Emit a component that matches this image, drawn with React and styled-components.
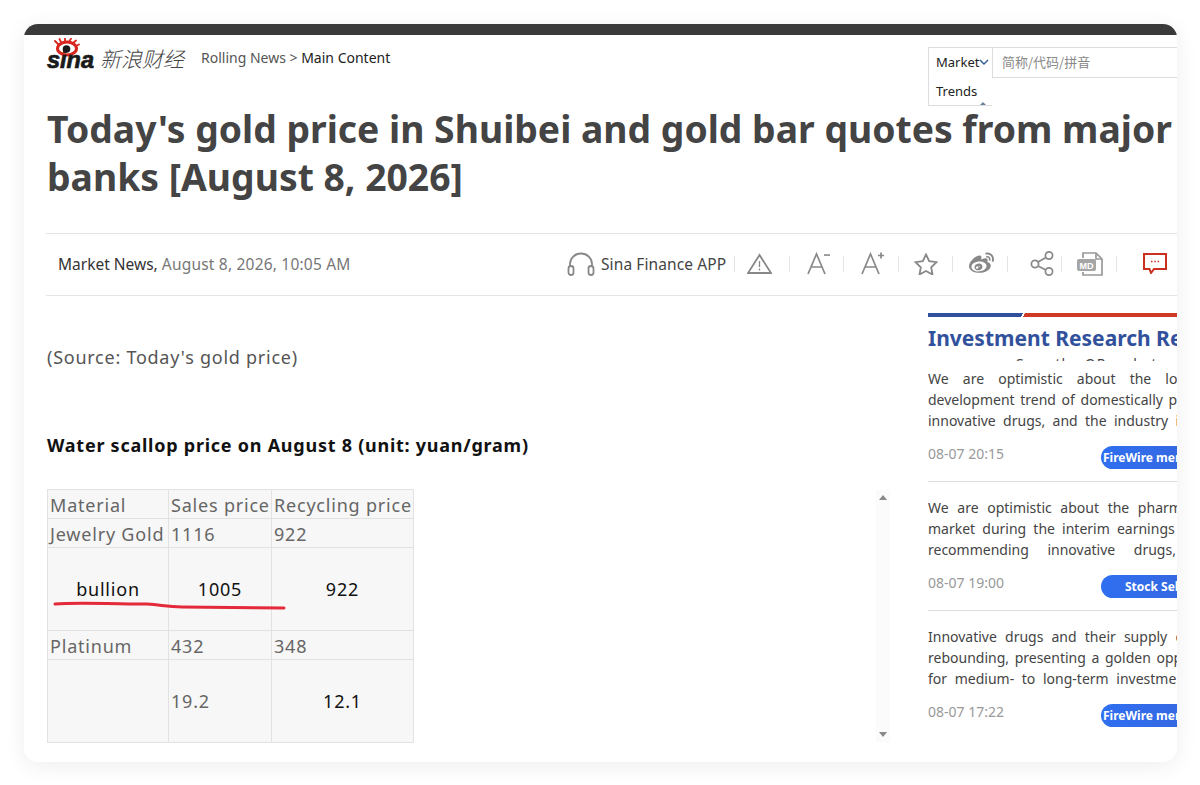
import React from "react";
import styled, { createGlobalStyle } from "styled-components";
import { FaWeibo } from "react-icons/fa";

const GlobalStyle = createGlobalStyle`
    html, body {
        margin: 0;
        background: #fff;
    }
    body {
        font-family: "Noto Sans", "Noto Sans CJK SC", sans-serif;
    }
`

const Page = styled.div`
    width: 1200px;
    height: 785px;
    padding: 24px 23px 23px 24px;
    box-sizing: border-box;
    overflow: hidden;
`

const Card = styled.div`
    height: 738px;
    background: #fff;
    border-radius: 14px;
    overflow: hidden;
    box-shadow: 0 4px 22px rgba(0, 0, 0, .07);
`

const TopBar = styled.div`
    height: 11px;
    background: #3a3a3a;
`

const Header = styled.header`
    height: 70px;
    padding: 3px 0 0 22px;
    box-sizing: border-box;
    display: flex;
    justify-content: space-between;
    align-items: flex-start;
`

const Brand = styled.div`
    display: flex;
    align-items: center;
`

const BrandName = styled.span`
    margin: 4px 0 0 4px;
    font-family: "Noto Sans CJK SC", sans-serif;
    font-size: 21px;
    font-style: italic;
    font-weight: 300;
    color: #444;
`

const Crumbs = styled.nav`
    margin: 2px 0 0 17px;
    font-size: 14px;
    color: #555;

    b {
        font-weight: 400;
        color: #222;
    }
`

const Search = styled.div`
    position: relative;
    width: 249px;
    height: 31px;
    margin-top: 9px;
    display: flex;
    font-size: 13px;
    box-sizing: border-box;
    border: 1px solid #ddd;
    border-right: 0;
`

const SearchType = styled.div`
    width: 64px;
    padding: 0 0 2px 7px;
    box-sizing: border-box;
    display: flex;
    align-items: center;
    color: #222;
    border-right: 1px solid #ddd;
`

const SearchMenu = styled.div`
    position: absolute;
    left: -1px;
    top: 29px;
    width: 64px;
    height: 29px;
    padding: 5px 0 0 7px;
    box-sizing: border-box;
    color: #222;
    background: #fff;
    border-left: 1px solid #ddd;
    border-bottom: 1px solid #ddd;

    &::after {
        content: "";
        position: absolute;
        right: 6px;
        bottom: 0;
        border: 3px solid transparent;
        border-top: 0;
        border-bottom: 3px solid #6c7f9c;
    }
`

const SearchInput = styled.div`
    padding: 0 0 2px 9px;
    display: flex;
    align-items: center;
    color: #888;
    font-family: "Noto Sans CJK SC", sans-serif;
`

const Title = styled.h1`
    margin: 0 0 32px 23px;
    width: 1130px;
    font-size: 37.300px;
    line-height: 48px;
    font-weight: 700;
    color: #444;
`

const MetaBar = styled.div`
    height: 63px;
    margin-left: 22px;
    padding: 0 7px 2px 12px;
    box-sizing: border-box;
    display: flex;
    align-items: center;
    justify-content: space-between;
    border-top: 1px solid #e4e4e4;
    border-bottom: 1px solid #e4e4e4;
    font-size: 15.500px;
`

const Source = styled.div`
    color: #333;

    span {
        color: #777;
        letter-spacing: .2px;
    }
`

const Actions = styled.div`
    display: flex;
    align-items: center;
`

const AppLink = styled.div`
    width: 167px;
    display: flex;
    align-items: center;
    gap: 6px;
    color: #444;
    letter-spacing: .1px;
`

const ActionCell = styled.div`
    width: 54.500px;
    height: 16px;
    box-sizing: border-box;
    display: flex;
    align-items: center;
    justify-content: center;
    color: #888;
    border-left: 1px solid #e4e4e4;

    svg {
        flex: none;
        transform: translateX(${props => props.$shift || 0}px);
    }
`

const Main = styled.div`
    display: flex;
    padding-left: 23px;
`

const Article = styled.article`
    width: 843px;
    margin-right: 38px;
    flex: none;
`

const SourceNote = styled.p`
    margin: 48px 0 0;
    font-size: 18px;
    line-height: 26px;
    letter-spacing: .75px;
    color: #555;
`

const SubHead = styled.h2`
    margin: 62px 0 0;
    font-size: 18px;
    line-height: 26px;
    font-weight: 700;
    letter-spacing: .75px;
    color: #111;
`

const TableWrap = styled.div`
    margin-top: 31px;
    display: flex;
    justify-content: space-between;
`

const TableBox = styled.div`
    position: relative;
    width: 366px;
`

const PriceTable = styled.table`
    width: 366px;
    table-layout: fixed;
    border-collapse: collapse;
    background: #f7f7f7;
    font-size: 18px;
    letter-spacing: .8px;
`

const Cell = styled.td`
    height: ${props => props.$h}px;
    padding: ${props => props.$h < 40 ? 2 : 0}px 2px 0;
    box-sizing: border-box;
    border: 1px solid #e2e2e2;
    white-space: nowrap;
    text-align: ${props => props.$dark ? "center" : "left"};
    color: ${props => props.$dark ? "#111" : "#666"};
`

const RedMark = styled.svg`
    position: absolute;
    left: 0;
    top: 100px;
`

const ScrollTrack = styled.div`
    width: 14px;
    height: 252px;
    margin-top: 1px;
    background: #fbfbfb;
    display: flex;
    flex-direction: column;
    align-items: center;
    justify-content: space-between;
    padding: 5px 0;
    box-sizing: border-box;
`

const Arrow = styled.i`
    border: 4px solid transparent;
    border-top: 0;
    border-bottom: 5px solid #888;
    ${props => props.$down && "transform: rotate(180deg);"}
`

const Side = styled.aside`
    width: 320px;
    flex: none;
    padding-top: 17px;
`

const SideRule = styled.div`
    height: 4px;
    background: linear-gradient(115deg, #31519c 0, #31519c 86px, #fff 86px, #fff 88px, #cf3a26 88px);
`

const SideTitle = styled.h3`
    margin: 5px 0 0;
    font-size: 21px;
    line-height: 32px;
    font-weight: 700;
    color: #31519c;
    white-space: nowrap;
`

const QrHint = styled.div`
    height: 7px;
    margin-left: 88px;
    overflow: hidden;
    font-size: 14px;
    line-height: 20px;
    letter-spacing: 1px;
    color: #444;
    white-space: nowrap;
`

const Report = styled.div`
    height: ${props => props.$first ? 121 : 129}px;
    padding-top: ${props => props.$first ? 7 : 15}px;
    box-sizing: border-box;
    border-bottom: ${props => props.$last ? "0" : "1px solid #ddd"};
`

const ReportLine = styled.div`
    height: 21px;
    font-size: 14px;
    line-height: 21px;
    color: #444;
    white-space: nowrap;
    word-spacing: ${props => props.$spread}px;
`

const ReportFoot = styled.div`
    margin-top: 13px;
    display: flex;
    align-items: flex-start;
    font-size: 14px;
    color: #999;
`

const Time = styled.span`
    width: 173px;
    line-height: 20px;
`

const Tag = styled.span`
    width: 140px;
    height: 23px;
    margin-top: 2px;
    padding-left: ${props => props.$pad}px;
    box-sizing: border-box;
    border-radius: 12px;
    background: linear-gradient(90deg, #2f6ff0, #3a63d8);
    font-size: 12px;
    line-height: 23px;
    font-weight: 700;
    color: #fff;
    white-space: nowrap;
`

const rows = [
    { h: 29, cells: ["Material", "Sales price", "Recycling price"] },
    { h: 29, cells: ["Jewelry Gold", "1116", "922"] },
    { h: 83, dark: [0, 1, 2], cells: ["bullion", "1005", "922"] },
    { h: 29, cells: ["Platinum", "432", "348"] },
    { h: 83, dark: [2], cells: ["", "19.2", "12.1"] },
]

const reports = [
    {
        lines: [
            ["We are optimistic about the long-term", 10.5],
            ["development trend of domestically produced", 2],
            ["innovative drugs, and the industry is", 3.7],
        ],
        time: "08-07 20:15",
        tag: "FireWire members",
        pad: 2,
    },
    {
        lines: [
            ["We are optimistic about the pharmaceutical", 5],
            ["market during the interim earnings season,", 3.5],
            ["recommending innovative drugs, CXO and", 15],
        ],
        time: "08-07 19:00",
        tag: "Stock Selection",
        pad: 24,
    },
    {
        lines: [
            ["Innovative drugs and their supply chain are", 4.5],
            ["rebounding, presenting a golden opportunity", 2],
            ["for medium- to long-term investment", 4],
        ],
        time: "08-07 17:22",
        tag: "FireWire members",
        pad: 2,
    },
]

const SinaLogo = () => (
    <svg width="50" height="36" viewBox="0 0 50 36">
        <g stroke="#d8251d" strokeWidth="1.800" strokeLinecap="round">
            <path d="M12 6 9 3M15 4 13.500 1M19 3.500 19 .5M23 3.500 25 .8M27 5 30 2.500M30 8 33 6.500" />
        </g>
        <ellipse cx="21" cy="10.500" rx="9.500" ry="6.500" fill="none" stroke="#d8251d" strokeWidth="3" />
        <circle cx="20.500" cy="11" r="3.800" fill="#1a1a1a" />
        <text x="1" y="30" textLength="47" lengthAdjust="spacingAndGlyphs" fontFamily="'Liberation Sans', sans-serif" fontSize="24" fontWeight="700" fontStyle="italic" stroke="#1a1a1a" strokeWidth=".7" fill="#1a1a1a">sina</text>
    </svg>
)

const Chevron = () => (
    <svg width="10" height="6" viewBox="0 0 10 6">
        <path d="M1 1l4 4 4-4" fill="none" stroke="#2f5a96" strokeWidth="1.400" />
    </svg>
)

const Headphones = () => (
    <svg width="28" height="24" viewBox="0 0 28 24" fill="none" stroke="#888" strokeWidth="1.800">
        <path d="M3 15V12a11 10.500 0 0 1 22 0v3" />
        <rect x="1.500" y="14" width="5" height="9" rx="2.500" />
        <rect x="21.500" y="14" width="5" height="9" rx="2.500" />
    </svg>
)

const Warning = () => (
    <svg width="25" height="21" viewBox="0 0 25 21" fill="none" stroke="#888" strokeWidth="1.800">
        <path d="M12.500 2 24 20H1z" />
        <path d="M12.500 8v6M12.500 15.500v2" strokeWidth="1.300" />
    </svg>
)

const FontSize = ({ plus }) => (
    <svg width="24" height="23" viewBox="0 0 24 23" fill="none" stroke="#888" strokeWidth="1.700">
        <path d="M1 22 9.500 2 18 22M4 15h11" />
        <path d={plus ? "M17 3.500h6M20 .5v6" : "M17 3h6"} />
    </svg>
)

const Star = () => (
    <svg width="24" height="22" viewBox="0 0 24 22" fill="none" stroke="#888" strokeWidth="1.800">
        <path d="M12 1.500l3.200 6.700 7.300 1-5.300 5.100 1.300 7.200L12 18l-6.500 3.500 1.300-7.200L1.500 9.200l7.300-1z" />
    </svg>
)

const Share = () => (
    <svg width="25" height="25" viewBox="0 0 25 25" fill="none" stroke="#888" strokeWidth="1.700">
        <circle cx="5" cy="13" r="3.600" />
        <circle cx="19" cy="4.500" r="3.600" />
        <circle cx="19" cy="20.500" r="3.600" />
        <path d="M8 11 16 6.500M8 15l8 4" />
    </svg>
)

const MdFile = () => (
    <svg width="27" height="24" viewBox="0 0 27 24">
        <path d="M6 6V1h13l6 6v16H6v-3" fill="none" stroke="#999" strokeWidth="1.700" />
        <path d="M19 1v6h6" fill="none" stroke="#999" strokeWidth="1.700" />
        <rect x="0" y="7" width="19" height="12" rx="2" fill="#a5a5a5" />
        <text x="2.500" y="16.500" fontFamily="'Liberation Sans', sans-serif" fontSize="9" fontWeight="700" fill="#fff">MD</text>
    </svg>
)

const Comment = () => (
    <svg width="24" height="21" viewBox="0 0 24 21">
        <path d="M1 1h22v15H11l-3 4-1.500-4H1z" fill="#fff" stroke="#c9301f" strokeWidth="2" />
        <path d="M8 8.500h1.500M11.300 8.500h1.500M14.600 8.500h1.500" stroke="#c9301f" strokeWidth="1.600" />
    </svg>
)

const App = () => {
    return (
        <Page>
            <GlobalStyle />
            <Card>
                <TopBar />
                <Header>
                    <Brand>
                        <SinaLogo />
                        <BrandName>新浪财经</BrandName>
                        <Crumbs>Rolling News &gt; <b>Main Content</b></Crumbs>
                    </Brand>
                    <Search>
                        <SearchType>Market<Chevron /></SearchType>
                        <SearchInput>简称/代码/拼音</SearchInput>
                        <SearchMenu>Trends</SearchMenu>
                    </Search>
                </Header>

                <Title>Today's gold price in Shuibei and gold bar quotes from major banks [August 8, 2026]</Title>

                <MetaBar>
                    <Source>Market News, <span>August 8, 2026, 10:05 AM</span></Source>
                    <Actions>
                        <AppLink><Headphones />Sina Finance APP</AppLink>
                        <ActionCell $shift={-2}><Warning /></ActionCell>
                        <ActionCell $shift={3}><FontSize /></ActionCell>
                        <ActionCell $shift={2}><FontSize plus /></ActionCell>
                        <ActionCell $shift={1}><Star /></ActionCell>
                        <ActionCell $shift={2}><FaWeibo size={25} /></ActionCell>
                        <ActionCell $shift={8}><Share /></ActionCell>
                        <ActionCell $shift={2}><MdFile /></ActionCell>
                        <ActionCell $shift={12}><Comment /></ActionCell>
                    </Actions>
                </MetaBar>

                <Main>
                    <Article>
                        <SourceNote>(Source: Today's gold price)</SourceNote>
                        <SubHead>Water scallop price on August 8 (unit: yuan/gram)</SubHead>
                        <TableWrap>
                            <TableBox>
                                <PriceTable>
                                    <colgroup>
                                        <col width="121" />
                                        <col width="103" />
                                        <col width="142" />
                                    </colgroup>
                                    <tbody>
                                        {rows.map(row => (
                                            <tr key={row.cells[0] + row.cells[1]}>
                                                {row.cells.map((text, i) => (
                                                    <Cell key={i} $h={row.h} $dark={row.dark?.includes(i)}>{text}</Cell>
                                                ))}
                                            </tr>
                                        ))}
                                    </tbody>
                                </PriceTable>
                                <RedMark width="250" height="24" viewBox="0 0 250 24">
                                    <path d="M8 15C30 13 60 15 100 15 115 16 120 18 135 18L237 19" fill="none" stroke="#e3293a" strokeWidth="3" strokeLinecap="round" />
                                </RedMark>
                            </TableBox>
                            <ScrollTrack>
                                <Arrow />
                                <Arrow $down />
                            </ScrollTrack>
                        </TableWrap>
                    </Article>

                    <Side>
                        <SideRule />
                        <SideTitle>Investment Research Reports</SideTitle>
                        <QrHint>Scan the QR code to subscribe</QrHint>
                        {reports.map((report, i) => (
                            <Report key={report.time} $first={i === 0} $last={i === 2}>
                                {report.lines.map(([text, spread]) => (
                                    <ReportLine key={text} $spread={spread}>{text}</ReportLine>
                                ))}
                                <ReportFoot>
                                    <Time>{report.time}</Time>
                                    <Tag $pad={report.pad}>{report.tag}</Tag>
                                </ReportFoot>
                            </Report>
                        ))}
                    </Side>
                </Main>
            </Card>
        </Page>
    )
}

export default App
